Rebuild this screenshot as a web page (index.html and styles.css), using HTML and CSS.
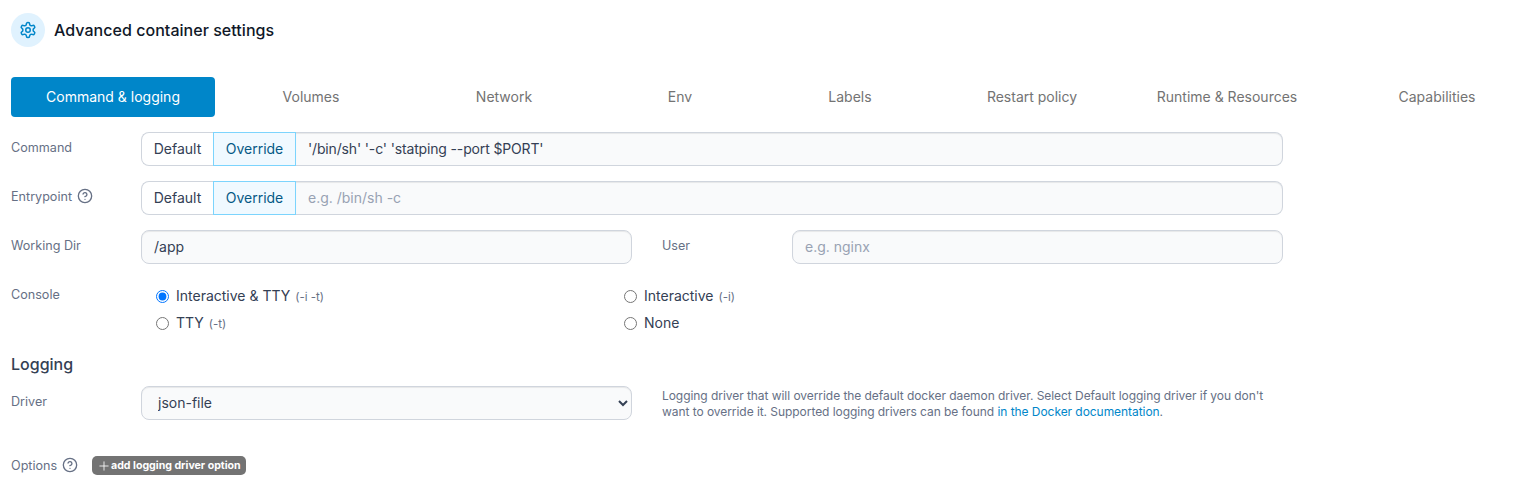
FILE: index.html
```html
<!DOCTYPE html>
<html lang="en">
<head>
<meta charset="utf-8">
<title>Advanced container settings</title>
<link rel="stylesheet" href="styles.css">
</head>
<body>
<div class="page">
  <header class="title-row">
    <span class="title-icon">
      <svg viewBox="0 0 24 24" width="18" height="18" fill="none" stroke="currentColor" stroke-width="2" stroke-linecap="round" stroke-linejoin="round"><path d="M12.22 2h-.44a2 2 0 0 0-2 2v.18a2 2 0 0 1-1 1.73l-.43.25a2 2 0 0 1-2 0l-.15-.08a2 2 0 0 0-2.73.73l-.22.38a2 2 0 0 0 .73 2.73l.15.1a2 2 0 0 1 1 1.72v.51a2 2 0 0 1-1 1.74l-.15.09a2 2 0 0 0-.73 2.73l.22.38a2 2 0 0 0 2.73.73l.15-.08a2 2 0 0 1 2 0l.43.25a2 2 0 0 1 1 1.73V20a2 2 0 0 0 2 2h.44a2 2 0 0 0 2-2v-.18a2 2 0 0 1 1-1.73l.43-.25a2 2 0 0 1 2 0l.15.08a2 2 0 0 0 2.73-.73l.22-.39a2 2 0 0 0-.73-2.73l-.15-.08a2 2 0 0 1-1-1.74v-.5a2 2 0 0 1 1-1.74l.15-.09a2 2 0 0 0 .73-2.73l-.22-.38a2 2 0 0 0-2.73-.73l-.15.08a2 2 0 0 1-2 0l-.43-.25a2 2 0 0 1-1-1.73V4a2 2 0 0 0-2-2z"/><circle cx="12" cy="12" r="3"/></svg>
    </span>
    <h1 class="title">Advanced container settings</h1>
  </header>

  <nav class="tabs">
    <a class="tab active">Command &amp; logging</a>
    <a class="tab">Volumes</a>
    <a class="tab">Network</a>
    <a class="tab">Env</a>
    <a class="tab">Labels</a>
    <a class="tab">Restart policy</a>
    <a class="tab">Runtime &amp; Resources</a>
    <a class="tab">Capabilities</a>
  </nav>

  <form class="form">
    <div class="row row-first">
      <label class="label">Command</label>
      <div class="group">
        <button type="button" class="seg">Default</button>
        <button type="button" class="seg seg-on">Override</button>
        <input class="group-input tight" type="text" value="'/bin/sh' '-c' 'statping --port $PORT'">
      </div>
    </div>
    <div class="row">
      <label class="label">Entrypoint
        <svg class="help" viewBox="0 0 24 24" width="16" height="16" fill="none" stroke="currentColor" stroke-width="2" stroke-linecap="round" stroke-linejoin="round"><circle cx="12" cy="12" r="10"/><path d="M9.09 9a3 3 0 0 1 5.83 1c0 2-3 3-3 3"/><path d="M12 17h.01"/></svg>
      </label>
      <div class="group">
        <button type="button" class="seg">Default</button>
        <button type="button" class="seg seg-on">Override</button>
        <input class="group-input" type="text" placeholder="e.g. /bin/sh -c">
      </div>
    </div>
    <div class="row">
      <label class="label">Working Dir</label>
      <input class="input" type="text" value="/app">
      <label class="label label-mid">User</label>
      <input class="input" type="text" placeholder="e.g. nginx">
    </div>
    <div class="row row-console">
      <label class="label">Console</label>
      <div class="radios">
        <label class="radio"><input type="radio" name="console" checked><span class="radio-text">Interactive &amp; TTY <small>(-i -t)</small></span></label>
        <label class="radio"><input type="radio" name="console"><span class="radio-text">Interactive <small>(-i)</small></span></label>
        <label class="radio"><input type="radio" name="console"><span class="radio-text">TTY <small>(-t)</small></span></label>
        <label class="radio"><input type="radio" name="console"><span class="radio-text">None</span></label>
      </div>
    </div>
    <h2 class="section">Logging</h2>
    <div class="row row-driver">
      <label class="label">Driver</label>
      <select class="select"><option>json-file</option></select>
      <p class="note">Logging driver that will override the default docker daemon driver. Select Default logging driver if you don't want to override it. Supported logging drivers can be found <a class="link">in the Docker documentation</a>.</p>
    </div>
    <div class="options">
      <span class="label-inline">Options
        <svg class="help" viewBox="0 0 24 24" width="16" height="16" fill="none" stroke="currentColor" stroke-width="2" stroke-linecap="round" stroke-linejoin="round"><circle cx="12" cy="12" r="10"/><path d="M9.09 9a3 3 0 0 1 5.83 1c0 2-3 3-3 3"/><path d="M12 17h.01"/></svg>
      </span>
      <button type="button" class="badge"><svg class="badge-plus" viewBox="0 0 24 24" width="10" height="10" fill="none" stroke="currentColor" stroke-width="2" stroke-linecap="round"><path d="M12 2v20M2 12h20"/></svg>add logging driver option</button>
    </div>
  </form>
</div>
</body>
</html>
```
FILE: styles.css
```css
* { box-sizing: border-box; }
html, body { margin: 0; padding: 0; background: #fff; overflow: hidden; }
body { font-family: Inter, "Liberation Sans", sans-serif; color: #344054; }
.page { width: 1521px; height: 480px; overflow: hidden; padding: 13px 0 0 11px; }

.title-row { display: flex; align-items: center; gap: 9px; height: 34px; }
.title-icon { width: 34px; height: 34px; border-radius: 50%; background: #e0f2fe; color: #0086c9; display: flex; align-items: center; justify-content: center; }
.title { margin: 0; font-size: 16px; font-weight: 500; letter-spacing: .04px; color: #101828; }

.tabs { display: grid; grid-template-columns: 204px 192px 194px 158px 182px 182px 208px 212px; margin-top: 30px; width: 1532px; height: 40px; }
.tab { display: flex; align-items: center; justify-content: center; padding-bottom: 1px; font-size: 14px; color: #737373; white-space: nowrap; }
.tab.active { background: #0086c9; color: #fff; border-radius: 4px; }

.form { display: block; width: 1272px; padding-top: 15px; }
.row { display: grid; grid-template-columns: 130px 491px 30px 130px 491px; min-height: 34px; margin-bottom: 15px; }
.row .group { grid-column: 2 / 6; }
.label { font-size: 12.6px; color: #667085; display: flex; align-items: center; gap: 5px; height: 30px; }
.label-mid { grid-column: 4; }
.help { color: #667085; }

.group { display: flex; height: 34px; }
.seg { font: inherit; font-size: 14px; color: #344054; background: #fff; border: 1px solid #d0d5dd; height: 34px; padding: 0 0 2px; margin: 0; white-space: nowrap; }
.seg:first-child { border-radius: 8px 0 0 8px; width: 72px; border-right: 0; }
.seg-on { width: 83px; background: #f0f9ff; border-color: #7cd4fd; color: #065986; }
.group-input { flex: 1; min-width: 0; font: inherit; font-size: 14px; height: 34px; padding: 0 12px 2px; color: #344054; background: #f9fafb; border: 1px solid #d0d5dd; border-left: 0; border-radius: 0 8px 8px 0; outline: none; box-shadow: inset 0 1px 1px rgba(0,0,0,.075); }
.tight { letter-spacing: -.15px; }
.input { width: 491px; font: inherit; font-size: 14px; height: 34px; padding: 0 12px 2px; color: #344054; background: #f9fafb; border: 1px solid #d0d5dd; border-radius: 8px; outline: none; box-shadow: inset 0 1px 1px rgba(0,0,0,.075); }
::placeholder { color: #98a2b3; opacity: 1; }

.row-console { margin-bottom: 0; }
.row-console .label { height: 30px; }
.radios { grid-column: 2 / 6; display: grid; grid-template-columns: 468px 1fr; grid-auto-rows: 27px; padding: 4px 0 0 15px; }
.radio { display: flex; align-items: center; font-size: 14px; color: #344054; white-space: nowrap; }
.radio input { margin: 0 7px 0 0; width: 13px; height: 13px; flex: none; }
.radio-text { padding-bottom: 2px; }
.radio small { font-size: 11.5px; color: #667085; margin-left: 1px; }

.section { margin: 15px 0 0; font-size: 16px; font-weight: 500; line-height: 24px; height: 30px; color: #344054; }
.row-driver { min-height: 34px; margin-bottom: 0; margin-top: 4px; }
.select { width: 491px; height: 34px; font: inherit; font-size: 14px; color: #344054; background: #f9fafb; border: 1px solid #d0d5dd; border-radius: 8px; padding: 0 12px 2px; outline: none; box-shadow: inset 0 1px 1px rgba(0,0,0,.075); }
.note { grid-column: 3 / 6; margin: 0; padding: 2px 0 0 30px; font-size: 12px; letter-spacing: -.055px; line-height: 16px; color: #667085; }
.link { color: #0086c9; }

.options { display: flex; align-items: center; margin-top: 35px; height: 20px; }
.label-inline { display: flex; align-items: center; gap: 5px; font-size: 12.6px; color: #667085; width: 81px; }
.badge { display: inline-flex; align-items: center; gap: 2px; height: 19px; width: 154px; padding: 0 0 0 7px; margin-top: 1px; border: 0; border-radius: 5px; background: #737373; color: #fff; font: inherit; font-size: 10.6px; font-weight: 700; white-space: nowrap; }
.badge-plus { flex: none; }
```
